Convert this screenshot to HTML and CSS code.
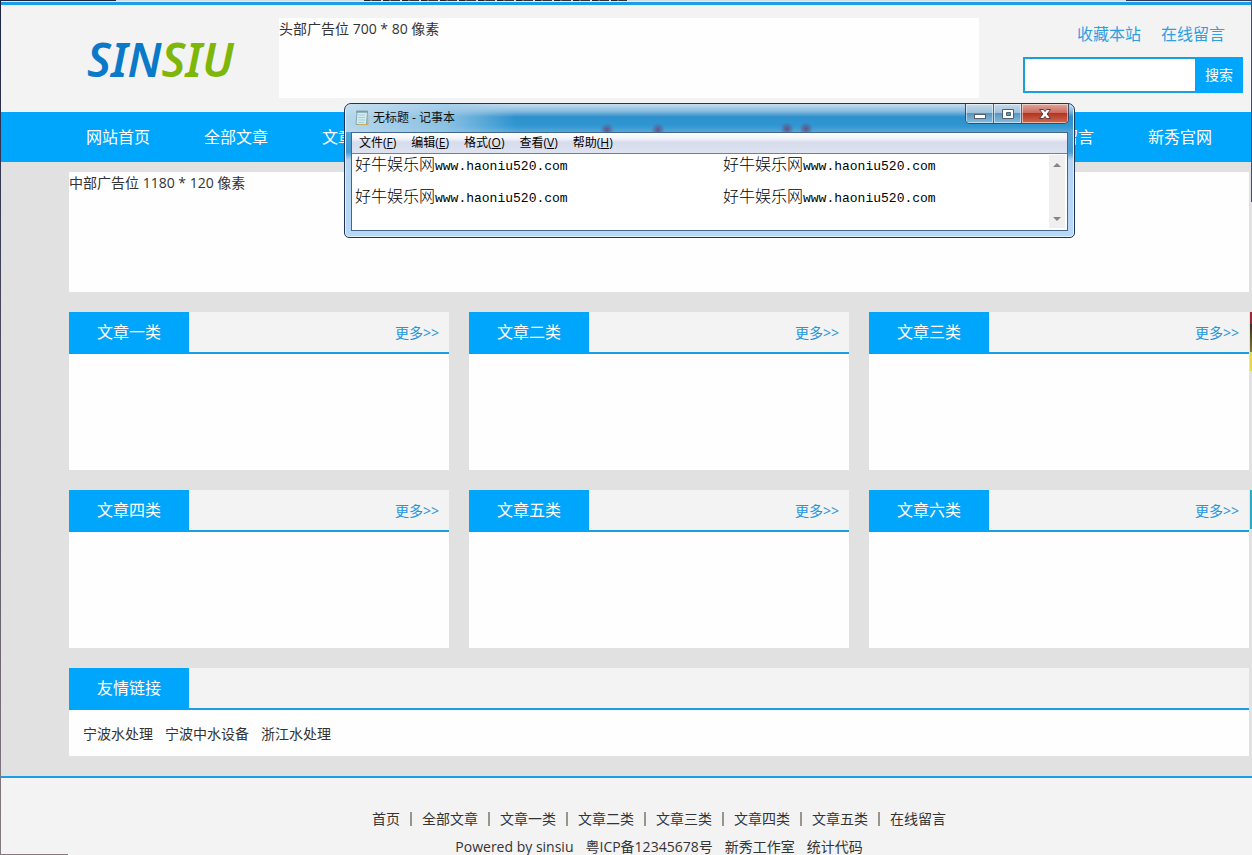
FILE: index.html
```html
<!DOCTYPE html>
<html lang="zh-CN">
<head>
<meta charset="utf-8">
<title>SINSIU</title>
<link rel="stylesheet" href="styles.css">
</head>
<body>
<div class="strip"></div>
<div class="site">
  <header class="header">
    <div class="wrap header-row">
      <a class="logo" href="#"><span class="logo-blue">SIN</span><span class="logo-green">SIU</span></a>
      <div class="ad ad-top">头部广告位 700 * 80 像素</div>
      <div class="tools">
        <div class="tool-links"><a href="#">收藏本站</a><a href="#">在线留言</a></div>
        <form class="search">
          <input class="search-input" type="text" aria-label="搜索">
          <button class="search-btn" type="button">搜索</button>
        </form>
      </div>
    </div>
  </header>
  <nav class="nav">
    <div class="wrap nav-row">
      <a href="#">网站首页</a><a href="#">全部文章</a><a href="#">文章一类</a><a class="covered" href="#">文章二类</a><a class="covered" href="#">文章三类</a><a class="covered" href="#">文章四类</a><a class="covered" href="#">文章五类</a><a class="covered" href="#">文章六类</a><a href="#">在线留言</a><a href="#">新秀官网</a>
    </div>
  </nav>
  <main class="wrap main">
    <div class="ad ad-mid">中部广告位 1180 * 120 像素</div>
    <div class="cards">
      <section class="card"><div class="head"><h2>文章一类</h2><a href="#">更多&gt;&gt;</a></div><div class="body"></div></section>
      <section class="card"><div class="head"><h2>文章二类</h2><a href="#">更多&gt;&gt;</a></div><div class="body"></div></section>
      <section class="card"><div class="head"><h2>文章三类</h2><a href="#">更多&gt;&gt;</a></div><div class="body"></div></section>
      <section class="card"><div class="head"><h2>文章四类</h2><a href="#">更多&gt;&gt;</a></div><div class="body"></div></section>
      <section class="card"><div class="head"><h2>文章五类</h2><a href="#">更多&gt;&gt;</a></div><div class="body"></div></section>
      <section class="card"><div class="head"><h2>文章六类</h2><a href="#">更多&gt;&gt;</a></div><div class="body"></div></section>
    </div>
    <section class="card">
      <div class="head"><h2>友情链接</h2></div>
      <div class="friends"><a href="#">宁波水处理</a><a href="#">宁波中水设备</a><a href="#">浙江水处理</a></div>
    </section>
  </main>
  <footer class="footer">
    <div class="wrap">
      <div class="foot-links"><a href="#">首页</a><a href="#">全部文章</a><a href="#">文章一类</a><a href="#">文章二类</a><a href="#">文章三类</a><a href="#">文章四类</a><a href="#">文章五类</a><a href="#">在线留言</a></div>
      <div class="copyright"><span>Powered by sinsiu</span><a href="#">粤ICP备12345678号</a><a href="#">新秀工作室</a><a href="#">统计代码</a></div>
    </div>
  </footer>
</div>
<div class="edge edge-left"></div>
<div class="edge edge-right"></div>
<div class="edge-bottom"></div>
<div class="scrap scrap-warm"></div>
<div class="scrap scrap-cool"></div>

<div class="notepad" role="dialog" aria-label="记事本">
  <div class="titlebar">
    <svg class="doc" width="14" height="16" viewBox="0 0 14 16" aria-hidden="true">
      <path d="M2 2h10.500l-1 12.500H1z" fill="#d3ecf0" stroke="#7fa8b2"/>
      <path d="M12.500 2.500l.5 12H3" fill="none" stroke="#c9a95c"/>
      <path d="M3 5h7M3 7.500h7M3 10h7M3 12.500h6" stroke="#a3cdd8"/>
      <path d="M2 .5v2M4 .5v2M6 .5v2M8 .5v2M10 .5v2M12 .5v2" stroke="#5d747d"/>
    </svg>
    <span class="title">无标题 - 记事本</span>
    <div class="controls">
      <button class="ctl" type="button" aria-label="最小化"><svg width="14" height="12" viewBox="0 0 14 12"><rect x="1.500" y="6.500" width="11" height="4" fill="#fff" stroke="#53606f"/></svg></button>
      <button class="ctl" type="button" aria-label="最大化"><svg width="14" height="12" viewBox="0 0 14 12"><path d="M1.500 1.500h11v9h-11zM5.500 4.500v3h4v-3z" fill="#fff" fill-rule="evenodd" stroke="#53606f"/></svg></button>
      <button class="ctl ctl-close" type="button" aria-label="关闭"><svg width="14" height="12" viewBox="0 0 14 12"><path d="M1.500 1.500h4L7 3.500l1.500-2h4L9.200 6l3.300 4.500h-4L7 8.500l-1.500 2h-4L4.800 6z" fill="#fff" stroke="#5c3a44"/></svg></button>
    </div>
  </div>
  <div class="client">
    <div class="menubar">
      <button type="button">文件(<u>F</u>)</button><button type="button">编辑(<u>E</u>)</button><button type="button">格式(<u>O</u>)</button><button type="button">查看(<u>V</u>)</button><button type="button">帮助(<u>H</u>)</button>
    </div>
    <div class="editor">
      <div class="text">
        <div>好牛娱乐网<span>www.haoniu520.com</span></div><div>好牛娱乐网<span>www.haoniu520.com</span></div>
        <div>好牛娱乐网<span>www.haoniu520.com</span></div><div>好牛娱乐网<span>www.haoniu520.com</span></div>
      </div>
      <div class="scroll" aria-hidden="true">
        <svg width="8" height="5" viewBox="0 0 8 5"><path d="M0 5l4-4 4 4z" fill="#858585"/></svg>
        <svg width="8" height="5" viewBox="0 0 8 5"><path d="M0 0h8L4 4z" fill="#858585"/></svg>
      </div>
    </div>
  </div>
</div>
</body>
</html>
```
FILE: styles.css
```css
* { box-sizing: border-box; }
body {
  margin: 0;
  position: relative;
  background: #e1e1e1;
  color: #333;
  font: 14px/22px "Open Sans", "Noto Sans CJK SC", sans-serif;
}
a { color: inherit; text-decoration: none; }
button, input { font: inherit; margin: 0; border: 0; padding: 0; }

.strip {
  height: 2px;
  background:
    repeating-linear-gradient(90deg, #222 0 6px, #666 6px 8px, #333 8px 17px, #ddd 17px 19px) 364px 0 / 263px 1px no-repeat,
    linear-gradient(90deg, #1c2240 116px, #d8dce2 116px, #d8dce2 calc(100% - 126px), #33375a calc(100% - 126px)) 0 0 / 100% 1px no-repeat,
    #e8ebee;
}
.site { overflow: hidden; height: calc(100vh - 2px); min-height: 600px; }
.wrap { padding: 0 3px 0 69px; }

.header { border-top: 3px solid #1a9ee6; background: #f3f3f3; }
.header-row { display: flex; height: 107px; padding-top: 13px; }
.logo {
  width: 210px;
  padding: 9px 0 0 18px;
  font: italic 600 46px/64px "Noto Sans", sans-serif;
}
.logo-blue { color: #0a7ac8; }
.logo-green { color: #7fb60a; }
.ad { background: #fefefe; }
.ad-top { flex: 0 1 700px; height: 80px; }
.tools { margin-left: auto; width: 226px; }
.tool-links {
  display: flex;
  justify-content: flex-end;
  gap: 20px;
  padding: 4px 24px 0 0;
  height: 39px;
  font-size: 16px;
  line-height: 24px;
  color: #2d9fe3;
}
.search { display: flex; width: 220px; height: 36px; }
.search-input { flex: 1; min-width: 0; padding: 0 8px; border: 2px solid #1a9fda; border-right: 0; background: #fff; }
.search-btn { width: 48px; background: #00a6fb; color: #fff; }

.nav { background: #00a6fb; color: #fff; }
.nav-row { display: flex; }
.nav-row a { flex: 1; margin-right: 20px; text-align: center; font-size: 16px; line-height: 50px; white-space: nowrap; }
.nav-row .covered { visibility: hidden; }

.main { display: flex; flex-direction: column; gap: 20px; padding-top: 10px; padding-bottom: 20px; }
.ad-mid { height: 120px; }
.cards { display: grid; grid-template-columns: repeat(3, 1fr); gap: 20px; }
.card { background: #fefefe; }
.head {
  display: flex;
  justify-content: space-between;
  align-items: center;
  height: 42px;
  border-bottom: 2px solid #1a9fe6;
  padding-right: 10px;
  background: #f3f3f3;
}
.head h2 {
  width: 120px;
  margin: 0 0 -2px;
  padding-bottom: 2px;
  background: #00a6fb;
  color: #fff;
  text-align: center;
  font-size: 16px;
  font-weight: 400;
  line-height: 40px;
}
.head a { color: #2196dc; line-height: 40px; padding-top: 2px; }
.body { height: 116px; }
.friends { display: flex; gap: 12px; padding: 13px 14px 11px; }

.footer { height: 200px; border-top: 2px solid #1a9fe6; background: #f3f3f3; padding-top: 30px; }
.foot-links, .copyright { display: flex; justify-content: center; white-space: nowrap; }
.foot-links { margin-bottom: 6px; }
.foot-links a + a::before {
  content: "";
  display: inline-block;
  width: 2px;
  height: 14px;
  margin: 0 10px;
  background: #99958a;
  vertical-align: -2px;
}
.copyright { gap: 12px; }

.edge { position: absolute; top: 0; width: 1px; }
.edge-left { left: 0; height: 100%; background: linear-gradient(#1b2448, #4b4a60 40%, #857a80); }
.edge-right { right: 0; height: 202px; background: #4a4a6c; }
.edge-bottom { position: absolute; left: 0; bottom: 0; width: 68px; height: 1px; background: #857a80; }
.scrap { position: absolute; right: 0; width: 2px; }
.scrap-warm { top: 312px; height: 59px; background: linear-gradient(#9c2a35 12px, #3b3020 12px, #857330 40px, #e3d750 40px); }
.scrap-cool { top: 490px; height: 39px; background: #2fa8c4; }

.notepad {
  position: absolute;
  left: 344px;
  top: 103px;
  width: 731px;
  height: 135px;
  display: flex;
  flex-direction: column;
  padding: 0 6px 6px;
  border: 1px solid #1d3557;
  border-radius: 7px 7px 5px 5px;
  box-shadow: inset 0 0 0 1px #e2f2fd;
  background: linear-gradient(#b9d6ee 0, #5ca5d6 20px, #459bd2 48px, #b4d4f1 56px, #b9d8f7 100%);
  color: #111;
}
.titlebar {
  display: flex;
  height: 28px;
  margin: 0 -5px;
  padding-left: 9px;
  border-radius: 6px 6px 0 0;
  background:
    radial-gradient(ellipse 7px 7px at 261px 26px, rgba(110, 60, 110, .8), transparent),
    radial-gradient(ellipse 7px 7px at 312px 26px, rgba(110, 60, 110, .8), transparent),
    radial-gradient(ellipse 7px 7px at 441px 25px, rgba(110, 60, 110, .8), transparent),
    radial-gradient(ellipse 7px 7px at 460px 25px, rgba(110, 60, 110, .8), transparent),
    linear-gradient(90deg, rgba(196, 222, 239, .9) 0, rgba(160, 204, 232, .8) 100px, transparent 170px),
    linear-gradient(#c5ddf0 0, #8abce0 7px, #2d90cc 13px, #3097d2 22px, #58a7d7 28px);
}
.doc { margin: 6px 4px 0 0; }
.title { font-size: 12px; line-height: 28px; }
.controls { display: flex; width: 104px; height: 20px; margin-left: auto; margin-right: 4px; border: 1px solid #364b66; border-top: 0; border-radius: 0 0 5px 5px; overflow: hidden; }
.ctl { display: flex; align-items: center; justify-content: center; width: 28px; border-right: 1px solid #45678a; background: linear-gradient(#c8dcea, #9fc2dc 45%, #5592bd 46%, #85bddf); box-shadow: inset 0 0 0 1px rgba(255, 255, 255, .5); }
.ctl-close { flex: 1; border: 0; background: linear-gradient(#e0a79c, #cc6c5e 45%, #b2301f 46%, #cf6a4e); }
.client { flex: 1; display: flex; flex-direction: column; border: 1px solid #41678f; background: #fff; }
.menubar { display: flex; gap: 1px; height: 21px; border-bottom: 1px solid #5c86ae; background: linear-gradient(#fff 0, #f1f3fa 6px, #d7dcec 9px, #dee3f2 100%); }
.menubar button { padding: 0 7px; background: none; font-size: 12px; line-height: 20px; white-space: nowrap; }
.editor { flex: 1; display: flex; }
.text { flex: 1; display: grid; grid-template-columns: 368px 1fr; align-content: start; row-gap: 16px; padding: 1px 0 0 3px; color: #000; font-family: "Noto Sans CJK SC", sans-serif; font-size: 16px; font-weight: 300; line-height: 16px; }
.text div { height: 16px; white-space: nowrap; }
.text span { font-family: "Liberation Mono", monospace; font-size: 13px; font-weight: 400; }
.scroll { display: flex; flex-direction: column; justify-content: space-between; align-items: center; width: 16px; margin: 1px 2px 2px 0; padding: 7px 0 6px; background: #efefef; }
```
